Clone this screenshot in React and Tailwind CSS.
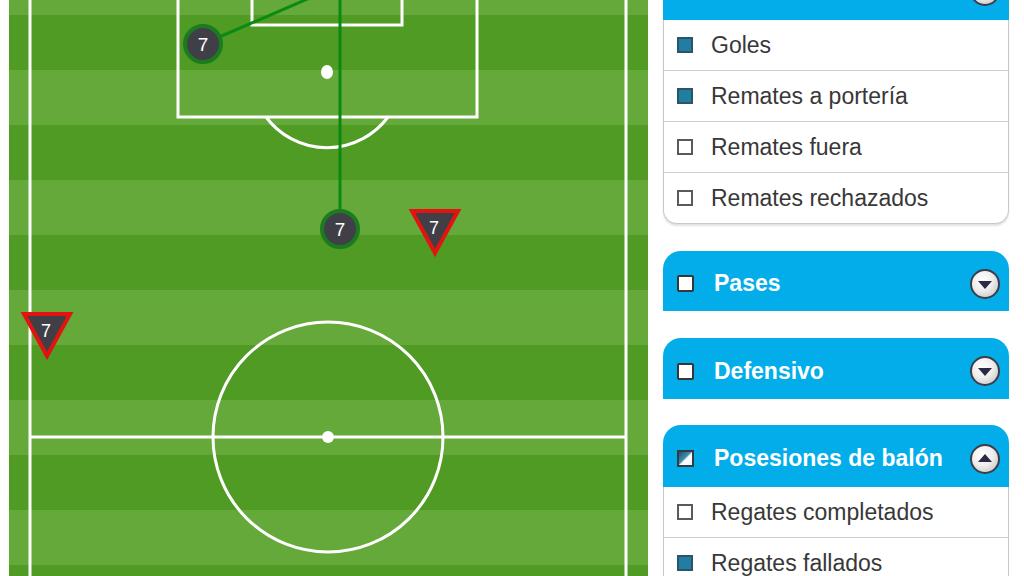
import React from "react";

const FONT = { fontFamily: '"Liberation Sans", Arial, sans-serif' };

const stripes = [-40, 70, 180, 290, 400, 510];

function Pitch() {
  return (
    <svg width="639" height="576" viewBox="9 0 639 576" className="block">
      {/* grass */}
      <rect x="9" y="0" width="639" height="576" fill="#64a93a" />
      {stripes.map((y) => (
        <rect key={y} x="9" y={y + 55} width="639" height="55" fill="#4f9b23" />
      ))}

      {/* lines */}
      <g stroke="#ffffff" strokeWidth="3" fill="none">
        <line x1="30" y1="-5" x2="30" y2="590" />
        <line x1="626" y1="-5" x2="626" y2="590" />
        <line x1="30" y1="437" x2="626" y2="437" />
        <circle cx="328" cy="437" r="115" />
        <rect x="178" y="-20" width="299" height="137" />
        <rect x="252" y="-20" width="150" height="45" />
        <path d="M 266 117 A 76 76 0 0 0 388 117" />
      </g>
      <circle cx="328" cy="437" r="6" fill="#ffffff" />
      <ellipse cx="327" cy="72" rx="6" ry="7" fill="#ffffff" />

      {/* passes */}
      <g stroke="#0b8a12" strokeWidth="3" fill="none">
        <line x1="340" y1="-5" x2="340" y2="215" />
        <line x1="203" y1="44" x2="312" y2="-3" />
      </g>

      {/* circle markers */}
      {[
        [203, 44],
        [340, 229],
      ].map(([cx, cy]) => (
        <g key={cx}>
          <circle cx={cx} cy={cy} r="18" fill="#403f47" stroke="#1d7b1f" strokeWidth="4" />
          <text
            x={cx}
            y={cy + 7}
            textAnchor="middle"
            fill="#ffffff"
            fontSize="19"
            style={FONT}
          >
            7
          </text>
        </g>
      ))}

      {/* triangle markers */}
      {[
        [435, 211],
        [47, 314],
      ].map(([cx, top]) => (
        <g key={cx}>
          <polygon
            points={`${cx - 23},${top} ${cx + 23},${top} ${cx},${top + 42}`}
            fill="#403f47"
            stroke="#e3130f"
            strokeWidth="4"
            strokeLinejoin="miter"
          />
          <text
            x={cx - 1}
            y={top + 23}
            textAnchor="middle"
            fill="#ffffff"
            fontSize="18"
            style={FONT}
          >
            7
          </text>
        </g>
      ))}
    </svg>
  );
}

function Box({ state }) {
  if (state === "on")
    return <span className="w-[16px] h-[16px] shrink-0 bg-[#1f7ea1] border-2 border-[#2c5366]" />;
  if (state === "half")
    return (
      <span className="w-[17px] h-[17px] shrink-0 border-2 border-[#2f3b45] bg-[linear-gradient(135deg,#24516b_0%,#3d8db0_45%,#ffffff_55%,#e6f2f7_100%)]" />
    );
  if (state === "head")
    return <span className="w-[17px] h-[17px] shrink-0 bg-white border-2 border-[#363636] rounded-[2px]" />;
  return <span className="w-[16px] h-[16px] shrink-0 bg-white border-2 border-[#5a5a5a]" />;
}

function Toggle({ open }) {
  return (
    <span className="w-[30px] h-[30px] shrink-0 rounded-full border-2 border-[#3d3d4a] bg-[radial-gradient(circle_at_40%_35%,#ffffff_0%,#eeeeee_45%,#bdbdbd_100%)] flex items-center justify-center">
      {open ? (
        <span className="w-0 h-0 border-l-[7px] border-r-[7px] border-b-[8px] border-l-transparent border-r-transparent border-b-[#2b2a45] mb-[2px]" />
      ) : (
        <span className="w-0 h-0 border-l-[7px] border-r-[7px] border-t-[8px] border-l-transparent border-r-transparent border-t-[#2b2a45] mt-[2px]" />
      )}
    </span>
  );
}

function Header({ title, box, open, h }) {
  return (
    <div
      className={`${h} bg-[#03adea] rounded-t-[18px] flex items-center pl-[14px] pr-[9px] pt-[5px]`}
    >
      {box && <Box state={box} />}
      <span className="ml-[20px] text-white font-bold text-[23px] flex-1 leading-none">{title}</span>
      <Toggle open={open} />
    </div>
  );
}

function Rows({ items, rounded }) {
  return (
    <div
      className={`bg-white border border-t-0 border-[#c9c9c9] ${
        rounded ? "rounded-b-[14px] shadow-[0_2px_2px_rgba(0,0,0,0.12)]" : ""
      }`}
    >
      {items.map(([label, state], i) => (
        <div
          key={label}
          className={`flex items-center pl-[13px] ${i > 0 ? "h-[51px] border-t border-[#cfcfcf]" : "h-[50px]"}`}
        >
          <Box state={state} />
          <span className="ml-[18px] text-[23px] text-[#383838] leading-none">{label}</span>
        </div>
      ))}
    </div>
  );
}

export default function App() {
  return (
    <div className="w-[1024px] h-[576px] overflow-hidden bg-white flex items-start" style={FONT}>
      <div className="pl-[9px] shrink-0">
        <Pitch />
      </div>

      <div className="ml-[15px] w-[346px] shrink-0 mt-[-44px]">
        {/* top of the "Remates" section, scrolled out of view */}
        <Header title="" open h="h-[64px]" />
        <Rows
          rounded
          items={[
            ["Goles", "on"],
            ["Remates a portería", "on"],
            ["Remates fuera", "off"],
            ["Remates rechazados", "off"],
          ]}
        />

        <div className="mt-[27px]">
          <Header title="Pases" box="head" h="h-[60px]" />
        </div>
        <div className="mt-[27px]">
          <Header title="Defensivo" box="head" h="h-[61px]" />
        </div>
        <div className="mt-[26px]">
          <Header title="Posesiones de balón" box="half" open h="h-[62px]" />
          <Rows
            items={[
              ["Regates completados", "off"],
              ["Regates fallados", "on"],
            ]}
          />
        </div>
      </div>
    </div>
  );
}
